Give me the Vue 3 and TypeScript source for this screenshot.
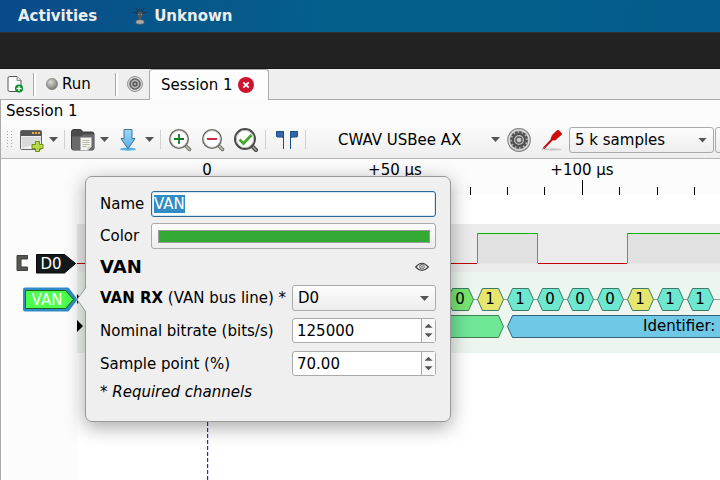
<script setup lang="ts">
import { onMounted, ref } from 'vue'

interface Bit { x: number; value: string; color: string }

const nameField = ref<HTMLInputElement | null>(null)
const traceName = ref('VAN')
const bitrate = ref('125000')
const samplePoint = ref('70.00')

const teal = '#6ee7d0'
const yellow = '#e6e66e'
const bits: Bit[] = [
  { x: 447, value: '0', color: '#78e66e' },
  { x: 477, value: '1', color: yellow },
  { x: 507, value: '1', color: teal },
  { x: 537, value: '0', color: teal },
  { x: 567, value: '0', color: teal },
  { x: 597, value: '0', color: teal },
  { x: 627, value: '1', color: yellow },
  { x: 657, value: '1', color: teal },
  { x: 687, value: '1', color: teal },
]
const minorTicks = [470, 507, 544, 619, 657, 694]

function hexagon(x: number): string {
  return `${x + 0.5},104.5 ${x + 5.5},93.5 ${x + 21.5},93.5 ${x + 26.5},104.5 ${x + 21.5},115.5 ${x + 5.5},115.5`
}

function stepBitrate(delta: number) {
  bitrate.value = String(Number(bitrate.value) + delta)
}
function stepSample(delta: number) {
  samplePoint.value = (Number(samplePoint.value) + delta).toFixed(2)
}

onMounted(() => {
  nameField.value?.focus({ preventScroll: true })
  nameField.value?.select()
})
</script>

<template>
  <div class="desktop">
    <header class="topbar">
      <button class="top-item" type="button">Activities</button>
      <button class="top-item app" type="button">
        <svg width="16" height="18" viewBox="0 0 16 18" aria-hidden="true">
          <path d="M1 5l4 1 2 4M15 5l-4 1-2 4M4 1l2 4v4M12 1l-2 4v4M7 2v2M9 2v2" fill="none" stroke="#26343d" stroke-width="1" />
          <path d="M6 5h4l1 3-2 4v2H7v-2L5 8z" fill="#4b5459" />
          <path d="M6.500 7h1v1h-1zM9 7h1v1H9z" fill="#9ba2a5" />
          <ellipse cx="8" cy="15" rx="4.200" ry="2.300" fill="#a9a9a9" stroke="#555" stroke-width=".6" />
        </svg>
        <span>Unknown</span>
      </button>
    </header>
    <div class="titlebar"></div>

    <main class="window">
      <nav class="tabs">
        <button class="tab-tool new" type="button" aria-label="New session">
          <svg width="16" height="18" viewBox="0 0 16 18">
            <path d="M2.500 1.500h7.500l4 4v9.500a1.500 1.500 0 0 1-1.500 1.500h-10A1.500 1.500 0 0 1 1 15V3A1.500 1.500 0 0 1 2.500 1.500z" fill="#fff" stroke="#555" />
            <path d="M10 1.500v4h4" fill="#ddd" stroke="#777" stroke-width=".8" />
            <circle cx="12" cy="13.500" r="4" fill="#0a8a28" />
            <path d="M12 11v5M9.500 13.500h5" stroke="#fff" stroke-width="1.300" />
          </svg>
        </button>
        <span class="tab-sep"></span>
        <button class="tab-tool run" type="button">
          <svg width="12" height="12" viewBox="0 0 12 12">
            <defs><radialGradient id="led" cx=".38" cy=".32" r=".7"><stop offset="0" stop-color="#d8dad2" /><stop offset=".6" stop-color="#a2a49c" /><stop offset="1" stop-color="#777872" /></radialGradient></defs>
            <circle cx="6" cy="6" r="5.500" fill="url(#led)" stroke="#777972" stroke-width=".8" />
          </svg>
          <span>Run</span>
        </button>
        <span class="tab-sep"></span>
        <button class="tab-tool settings" type="button" aria-label="Settings">
          <svg width="16" height="16" viewBox="0 0 24 24">
            <circle cx="12" cy="12" r="11.300" fill="#d6d6d6" stroke="#808080" stroke-width="1.200" />
            <circle cx="12" cy="12" r="7.500" fill="#bbb" stroke="#626262" stroke-width="2.400" />
            <circle cx="12" cy="12" r="3" fill="#aaa" stroke="#555" stroke-width="2.200" />
          </svg>
        </button>
        <div class="tab">
          <span>Session 1</span>
          <button class="close" type="button" aria-label="Close session">
            <svg width="16" height="16" viewBox="0 0 16 16">
              <circle cx="8" cy="8" r="8" fill="#cc142e" />
              <path d="M5.300 5.300l5.400 5.400M10.700 5.300l-5.400 5.400" stroke="#fff" stroke-width="1.800" />
            </svg>
          </button>
        </div>
        <span class="tab-rest"></span>
      </nav>

      <section class="session">
        <h1 class="session-title">Session 1</h1>
        <div class="toolbar">
          <svg class="grip" width="5" height="18" viewBox="0 0 5 18" aria-hidden="true">
            <path d="M.5 0v18M4.500 0v18" stroke="#a5a5a5" stroke-dasharray="1 2" />
          </svg>
          <div class="split first">
            <button class="icon" type="button" aria-label="New view">
              <svg width="24" height="24" viewBox="0 0 24 24">
                <rect x=".5" y="2.500" width="21" height="19" rx="1" fill="#f0f0f0" stroke="#666" />
                <path d="M1 3h20.500v5H1z" fill="#555" />
                <path d="M2 9h19v4l-8 4-11 3z" fill="#dadada" />
                <path d="M12 4h2v2h-2zM15 4h2v2h-2zM18 4h2v2h-2z" fill="#f2ad3c" />
                <path d="M15.500 13.500h4v3h3.500v4h-3.500v3h-4v-3H12v-4h3.500z" fill="#b9d845" stroke="#6b9415" />
              </svg>
            </button>
            <button class="arrow" type="button" aria-label="View options"><i class="down"></i></button>
          </div>
          <span class="sep"></span>
          <div class="split">
            <button class="icon" type="button" aria-label="Open">
              <svg width="24" height="24" viewBox="0 0 24 24">
                <path d="M.5 4q0-2.500 2.500-2.500h6q2 0 2.500 2.500h9.500q2 0 2 2v14q0 2-2 2H2.500q-2 0-2-2z" fill="#4c4c4c" stroke="#3c3c3c" />
                <path d="M1 8.500h9l2-2h11V21q0 1-2 1H2.500Q1 22 1 20z" fill="#6a6a6a" />
                <path d="M9.500 9.500h11v9l-4 4h-7z" fill="#f3f3ee" stroke="#aaa" stroke-width=".7" />
                <path d="M11.500 12.500h7M11.500 14.500h7M11.500 16.500h7M11.500 18.500h4" stroke="#b8b0a0" stroke-width=".9" />
                <path d="M20.500 18.500l-4 4v-4z" fill="#ccc" />
              </svg>
            </button>
            <button class="arrow" type="button" aria-label="Open options"><i class="down"></i></button>
          </div>
          <div class="split">
            <button class="icon" type="button" aria-label="Save">
              <svg width="24" height="24" viewBox="0 0 24 24">
                <defs><linearGradient id="save" x2="0" y2="1"><stop stop-color="#a1daf8" /><stop offset="1" stop-color="#52a9e3" /></linearGradient></defs>
                <ellipse cx="12" cy="21.200" rx="8" ry="1.600" fill="#55b3e8" />
                <path d="M8 1.500h8v9h3L12 21 5 10.500h3z" fill="url(#save)" stroke="#3f7598" />
              </svg>
            </button>
            <button class="arrow" type="button" aria-label="Save options"><i class="down"></i></button>
          </div>
          <span class="sep"></span>
          <div class="zooms">
            <button class="icon" type="button" aria-label="Zoom in">
              <svg width="24" height="24" viewBox="0 0 24 24">
                <path d="M16.500 16.500l5 5" stroke="#6c6c64" stroke-width="3.500" stroke-linecap="round" />
                <path d="M17 17l4.500 4.500" stroke="#c6c6bd" stroke-width="1.500" stroke-linecap="round" />
                <circle cx="11" cy="11" r="9.200" fill="#fff" stroke="#66665e" stroke-width="1.600" />
                <circle cx="11" cy="11" r="8.200" fill="none" stroke="#ccccc4" stroke-width=".9" />
                <path d="M6 11h10M11 6v10" stroke="#0b7c20" stroke-width="1.800" />
              </svg>
            </button>
            <button class="icon" type="button" aria-label="Zoom out">
              <svg width="24" height="24" viewBox="0 0 24 24">
                <path d="M16.500 16.500l5 5" stroke="#6c6c64" stroke-width="3.500" stroke-linecap="round" />
                <path d="M17 17l4.500 4.500" stroke="#c6c6bd" stroke-width="1.500" stroke-linecap="round" />
                <circle cx="11" cy="11" r="9.200" fill="#fff" stroke="#66665e" stroke-width="1.600" />
                <circle cx="11" cy="11" r="8.200" fill="none" stroke="#ccccc4" stroke-width=".9" />
                <path d="M6 11h10" stroke="#c8102e" stroke-width="1.800" />
              </svg>
            </button>
            <button class="icon" type="button" aria-label="Zoom to fit">
              <svg width="24" height="24" viewBox="0 0 24 24">
                <path d="M17.500 17.500l4.500 4.500" stroke="#484844" stroke-width="4" stroke-linecap="round" />
                <path d="M18 18l4 4" stroke="#aaa" stroke-width="1.500" stroke-linecap="round" />
                <circle cx="11" cy="11" r="10" fill="#fff" stroke="#4b4b48" stroke-width="2" />
                <circle cx="11" cy="11" r="8.600" fill="none" stroke="#bbb" stroke-width="1" />
                <path d="M5.500 11.500l4 4 8-8.500" fill="none" stroke="#43a82a" stroke-width="2.800" />
              </svg>
            </button>
          </div>
          <span class="sep"></span>
          <button class="icon flags" type="button" aria-label="Show cursors">
            <svg width="24" height="20" viewBox="0 0 24 20">
              <path d="M8.500 19V1.500" stroke="#1d4c8a" />
              <path d="M1.500 1.500h7v6.500L7 7H2L1.500 6.500z" fill="#3467a8" stroke="#1d4c8a" />
              <path d="M15.500 19V1.500" stroke="#1d4c8a" />
              <path d="M15.500 1.500h7v5L22 7h-5l-1.500 1z" fill="#3467a8" stroke="#1d4c8a" />
            </svg>
          </button>
          <span class="sep"></span>
          <button class="device" type="button"><span>CWAV USBee AX</span><i class="down"></i></button>
          <button class="icon" type="button" aria-label="Configure device">
            <svg width="24" height="24" viewBox="0 0 24 24">
              <circle cx="12" cy="12" r="11.300" fill="#e2e2e2" stroke="#858585" stroke-width="1.200" />
              <circle cx="12" cy="12" r="9.500" fill="#aaa" />
              <circle cx="12" cy="12" r="7.800" fill="none" stroke="#4d4d4d" stroke-width="2" stroke-dasharray="2.450 1.630" />
              <circle cx="12" cy="12" r="6" fill="#c4c4c4" stroke="#4d4d4d" stroke-width="2" />
              <circle cx="12" cy="12" r="3" fill="#ccc" stroke="#606060" stroke-width="1.500" />
            </svg>
          </button>
          <button class="icon probe" type="button" aria-label="Configure channels">
            <svg width="30" height="24" viewBox="0 0 30 24">
              <ellipse cx="18" cy="21.500" rx="9" ry="1.200" fill="#c8c8c8" />
              <path d="M8.500 20.500l9-9.500" stroke="#c50808" stroke-width="1.900" />
              <path d="M7.500 21.500l2-2.500" stroke="#777" stroke-width="1" />
              <path d="M17.500 7l4.500-4.500h2l3 3.500-6.500 6h-3l-1.500-1.500z" fill="#d20a0a" stroke="#9d0606" stroke-width=".6" />
            </svg>
          </button>
          <div class="combos">
            <div class="select samples">
              <select aria-label="Sample count"><option>5 k samples</option></select>
              <i class="down"></i>
            </div>
            <div class="select rate">
              <select aria-label="Sample rate"><option></option></select>
            </div>
          </div>
        </div>

        <div class="view">
          <svg class="ruler" width="100%" height="36" aria-label="Time ruler">
            <g text-anchor="middle">
              <text x="207" y="16">0</text>
              <text x="395" y="16">+50 µs</text>
              <text x="582" y="16">+100 µs</text>
            </g>
            <rect x="582" y="21" width="1" height="15" />
            <rect v-for="t in minorTicks" :key="t" :x="t" y="28" width="1" height="8" />
          </svg>
          <svg class="traces" width="100%" height="285" aria-label="Traces">
            <rect x="77" width="100%" height="285" fill="#fff" />
            <rect x="77" y="29" width="100%" height="48" fill="#ebebeb" />
            <rect x="77" y="77" width="100%" height="81" fill="#edf6ee" />
            <path d="M477 38.500h61v30h-61zM627 38.500h900v30H627z" fill="#e1e1e1" />
            <path d="M77 68.500h400M538 68.500h89" stroke="#c00000" />
            <path d="M477 38.500h60M627 38.500h900" stroke="#00b400" />
            <path d="M477.500 38v30M537.500 38v30M627.500 38v30" stroke="#808080" />
            <path d="M77 104.500h1450" stroke="#999" />
            <g v-for="b in bits" :key="b.x">
              <polygon :points="hexagon(b.x)" :fill="b.color" stroke="#3c7a68" />
              <text :x="b.x + 13" y="109" text-anchor="middle">{{ b.value }}</text>
            </g>
            <polygon points="300,120.500 498.500,120.500 503.500,131.500 498.500,142.500 300,142.500" fill="#6ee696" stroke="#3f8256" />
            <polygon points="1500,120.500 512.500,120.500 507.500,131.500 512.500,142.500 1500,142.500" fill="#6ec8e6" stroke="#35627c" />
            <text x="643" y="136">Identifier:</text>
            <path d="M77 99l4 5-4 5zM77 125l6 6-6 6z" />
            <path d="M207.500 0v285" stroke="#2c2cc4" stroke-dasharray="4 2" stroke-dashoffset="1" />
            <path d="M208.500 0v285" stroke="#d8d8f4" stroke-dasharray="4 2" stroke-dashoffset="1" />
            <path d="M27.500 60.500H17v15h10.500v-3.500H21v-8h6.500z" fill="#555753" stroke="#3f413d" />
            <path d="M36.500 59.500h28l11 9-11 9.500h-28z" fill="#14191b" stroke="#080a0b" />
            <text x="51" y="74" text-anchor="middle" fill="#fff">D0</text>
            <path d="M25 94.500h42.500l7.500 10-7.500 10H25z" fill="#4dff4d" stroke="#308cc6" stroke-width="4" stroke-linejoin="round" />
            <path d="M25.500 95.500h40l8 9-8 9h-40z" fill="#4dff4d" stroke="#1c641c" />
            <text x="47" y="110" text-anchor="middle" fill="#fff">VAN</text>
          </svg>

          <form class="popup" @submit.prevent>
            <svg class="pointer" width="11" height="26" viewBox="0 0 11 26" aria-hidden="true">
              <path d="M11 .5h-1L1 12.500 10 25h1z" fill="#efefef" />
              <path d="M10 .5L1 12.500 10 25" fill="none" stroke="#999" />
            </svg>
            <div class="identity">
              <div class="row short">
                <label for="trace-name">Name</label>
                <input id="trace-name" ref="nameField" v-model="traceName" class="field name" type="text" />
              </div>
              <div class="row short">
                <label for="trace-color">Color</label>
                <button id="trace-color" class="field color" type="button"><span class="swatch"></span></button>
              </div>
            </div>
            <div class="heading">
              <h2>VAN</h2>
              <button class="eye" type="button" aria-label="Toggle visibility">
                <svg width="14" height="10" viewBox="0 0 14 10">
                  <path d="M.7 5Q7-2.500 13.300 5 7 12 .7 5z" fill="#f6f6f6" stroke="#444" stroke-width="1.200" />
                  <circle cx="7" cy="4.800" r="2.300" fill="#eee" stroke="#555" />
                  <circle cx="7" cy="4.800" r=".8" fill="#333" />
                </svg>
              </button>
            </div>
            <div class="row">
              <label for="channel"><b>VAN RX</b> (VAN bus line) *</label>
              <div class="select">
                <select id="channel"><option>D0</option></select>
                <i class="down"></i>
              </div>
            </div>
            <div class="row">
              <label for="bitrate">Nominal bitrate (bits/s)</label>
              <div class="spin">
                <input id="bitrate" v-model="bitrate" type="text" inputmode="numeric" />
                <span class="steps">
                  <button type="button" aria-label="Increase bitrate" @click="stepBitrate(1)"><i class="up"></i></button>
                  <button type="button" aria-label="Decrease bitrate" @click="stepBitrate(-1)"><i class="down"></i></button>
                </span>
              </div>
            </div>
            <div class="row">
              <label for="sample">Sample point (%)</label>
              <div class="spin">
                <input id="sample" v-model="samplePoint" type="text" inputmode="decimal" />
                <span class="steps">
                  <button type="button" aria-label="Increase sample point" @click="stepSample(1)"><i class="up"></i></button>
                  <button type="button" aria-label="Decrease sample point" @click="stepSample(-1)"><i class="down"></i></button>
                </span>
              </div>
            </div>
            <p class="note">* Required channels</p>
          </form>
        </div>
      </section>
    </main>
  </div>
</template>

<style>
body {
  background: #fff;
}
</style>

<style scoped>
.desktop {
  display: flex;
  flex-direction: column;
  min-height: 100vh;
  overflow: hidden;
  color: #000;
  font: 15px/18px "DejaVu Sans", sans-serif;
}
.desktop *, .desktop {
  box-sizing: border-box;
}
button, input, select {
  margin: 0;
  padding: 0;
  border: 0;
  background: none;
  color: inherit;
  font: inherit;
  outline: none;
}
svg { display: block; flex: none; }
.topbar {
  display: flex;
  align-items: center;
  gap: 35px;
  height: 32px;
  padding-left: 18px;
  background: linear-gradient(100deg, #094a89 0%, #075689 22%, #045f8b 45%, #045f8b 75%, #045a88 100%);
  color: #eee;
  font-weight: bold;
}
.top-item { display: flex; align-items: center; gap: 6px; }
.titlebar {
  height: 37px;
  border-top: 1px solid #303030;
  border-bottom: 1px solid #171717;
  background: #222;
}
.window { display: flex; flex: 1; flex-direction: column; background: #efefef; }
.tabs { display: flex; height: 31px; }
.tab-tool, .tab-sep { border-bottom: 1px solid #aaa; }
.tab-tool { display: flex; align-items: center; justify-content: center; gap: 4px; }
.new { width: 29px; }
.run { width: 73px; justify-content: flex-start; padding-left: 8px; }
.settings { width: 38px; padding-right: 9px; }
.tab-sep { width: 9px; }
.tab-sep::before {
  content: "";
  display: block;
  width: 2px;
  height: 23px;
  margin: 4px 0 0 4px;
  border-left: 1px solid #aaa;
  background: #fff;
}
.tab {
  display: flex;
  align-items: center;
  gap: 5px;
  width: 120px;
  margin-left: -9px;
  padding-left: 11px;
  border: 1px solid #aaa;
  border-bottom: 0;
  border-radius: 3px 3px 0 0;
  background: #fdfdfd;
}
.tab span { white-space: nowrap; }
.tab-rest { flex: 1; border-bottom: 1px solid #aaa; }
.session { display: flex; flex: 1; flex-direction: column; border-left: 1px solid #aaa; background: #fcfcfc; }
.session-title { margin: 0; padding: 2px 5px; font: inherit; }
.toolbar {
  display: flex;
  align-items: center;
  gap: 4px;
  height: 37px;
  padding: 0 0 1px 6px;
  border-bottom: 1px solid #b4b4b4;
  background: linear-gradient(#fcfcfc, #eee);
}
.toolbar > * { flex: none; }
.split { display: flex; }
.first { margin-left: 4px; }
.icon { width: 24px; height: 24px; }
.arrow { width: 17px; height: 24px; padding-left: 5px; }
.sep { width: 1px; height: 19px; margin: 0 2px 0 -1px; background: #d2d2d2; }
.zooms { display: flex; gap: 9px; padding: 0 4px 0 1px; }
.flags { display: grid; place-items: center; width: 30px; }
.probe { width: 30px; }
.device { display: flex; align-items: center; justify-content: space-between; width: 191px; padding: 0 3px 0 26px; }
.combos { display: flex; gap: 1px; }
.samples { width: 145px; }
.rate { width: 120px; }
.toolbar .combos { flex: 1; overflow: hidden; }
.combos .select { flex: none; }
.down, .up { display: block; width: 9px; height: 5px; background: #555; clip-path: polygon(0 0, 100% 0, 50% 100%); }
.up { clip-path: polygon(0 100%, 100% 100%, 50% 0); }
.select { position: relative; height: 26px; }
.select select {
  width: 100%;
  height: 100%;
  padding: 0 22px 0 5px;
  border: 1px solid #aaa;
  border-radius: 3px;
  background: linear-gradient(#fdfdfd, #ededed);
  appearance: none;
}
.select .down { position: absolute; top: 11px; right: 7px; pointer-events: none; }
.view { position: relative; flex: 1; }
.ruler, .traces { width: calc(100% + 1px); margin-left: -1px; background: #fcfcfc; }
.view::before {
  content: "";
  position: absolute;
  inset: 0 auto 0 -1px;
  width: 2px;
  border-left: 1px solid #aaa;
  background: #fff;
}
.popup {
  position: absolute;
  top: 17px;
  left: 84px;
  display: flex;
  flex-direction: column;
  gap: 7px;
  width: 366px;
  padding: 14px 14px 21px;
  border: 1px solid #999;
  border-radius: 7px;
  background: #efefef;
  box-shadow: 0 5px 20px rgba(0, 0, 0, 0.35);
}
.pointer { position: absolute; top: 110px; left: -10px; }
.identity { display: grid; gap: 6px; }
.row { display: grid; grid-template-columns: 1fr 144px; align-items: center; height: 26px; white-space: nowrap; }
.row.short { grid-template-columns: 51px 1fr; }
.field { width: 100%; height: 26px; border: 1px solid #aaa; border-radius: 3px; }
.name { padding: 0 2px; border-color: #2a6a95; background: #fff; box-shadow: inset 0 0 0 1px #d3e8f4; }
.name::selection { background: rgba(48, 140, 198, 0.996); color: #fff; }
.color { padding: 6px 5px 6px 6px; background: linear-gradient(#fdfdfd, #ededed); }
.swatch { display: block; height: 13px; border: 1px solid #999; background: #33a833; }
.heading { display: flex; align-items: center; justify-content: space-between; height: 22px; padding-right: 7px; }
h2 { margin: 0; font: bold 18px/22px "DejaVu Sans", sans-serif; }
.spin { display: flex; align-self: start; height: 25px; border: 1px solid #aaa; border-radius: 3px; background: #fff; }
.spin input { flex: 1; width: 0; padding-left: 4px; }
.steps { display: grid; width: 14px; padding: 2px 0; border-left: 1px solid #aaa; background: #f8f8f8; }
.steps button { display: grid; place-items: center; }
.steps i { width: 8px; height: 4px; }
.note { margin: 0; font-style: italic; line-height: 16px; }
text { font: 15px "DejaVu Sans", sans-serif; }
</style>
